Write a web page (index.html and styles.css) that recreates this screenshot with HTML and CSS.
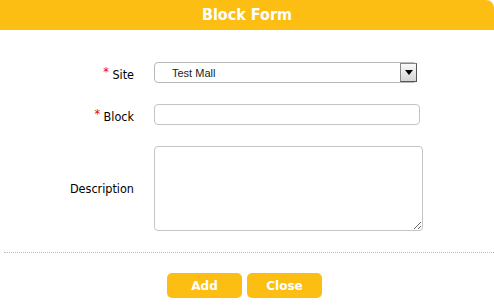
FILE: index.html
```html
<!DOCTYPE html>
<html lang="en">
<head>
    <meta charset="UTF-8">
    <title>Block Form</title>
    <link rel="stylesheet" href="styles.css">
</head>
<body>
    <div class="dialog">
        <div class="dialog-title">Block Form</div>
        <form class="block-form">
            <label class="field-label" for="site"><span class="req">*</span> Site</label>
            <div class="select-box" id="site">
                <span class="select-value">Test Mall</span>
                <span class="select-arrow">
                    <svg width="8" height="5" viewBox="0 0 8 5"><path d="M0 0h8L4 5z" fill="#000"/></svg>
                </span>
            </div>

            <label class="field-label" for="block"><span class="req">*</span> Block</label>
            <input class="text-input" type="text" id="block" name="block">

            <label class="field-label" for="description">Description</label>
            <textarea class="text-area" id="description" name="description"></textarea>
        </form>
        <div class="actions">
            <button type="button" class="btn">Add</button>
            <button type="button" class="btn">Close</button>
        </div>
    </div>
</body>
</html>
```

FILE: styles.css
```css
body {
    margin: 0;
    background: #fff;
    font-family: "DejaVu Sans Condensed", "DejaVu Sans", sans-serif;
    font-size: 12.5px;
    color: #000;
}
.dialog {
    width: 494px;
}
.dialog-title {
    height: 30px;
    line-height: 30px;
    background: #fdbe14;
    color: #fff;
    font-weight: bold;
    font-size: 16px;
    text-align: center;
    border-top-right-radius: 8px;
}
.block-form {
    display: grid;
    grid-template-columns: 134px auto;
    column-gap: 20px;
    row-gap: 21px;
    align-items: center;
    padding-top: 32px;
    justify-items: start;
}
.field-label {
    justify-self: end;
}
.req {
    color: #e00;
    vertical-align: 3px;
}
.select-box {
    box-sizing: border-box;
    width: 263px;
    height: 21px;
    border: 1px solid #b8b8b8;
    border-radius: 4px;
    display: flex;
    align-items: center;
    justify-content: space-between;
    font-family: "Liberation Sans", sans-serif;
    font-size: 11px;
    color: #222;
}
.select-value {
    padding-left: 17px;
}
.select-arrow {
    box-sizing: border-box;
    width: 17px;
    height: 19px;
    margin-right: -1px;
    border: 1px solid #555;
    border-left-color: #888;
    border-top-color: #888;
    background: linear-gradient(#fafafa, #d4d4d4);
    display: flex;
    align-items: center;
    justify-content: center;
}
.text-input {
    box-sizing: border-box;
    width: 266px;
    height: 21px;
    margin: 0;
    border: 1px solid #c4c4c4;
    border-radius: 4px;
}
.text-area {
    box-sizing: border-box;
    width: 269px;
    height: 85px;
    margin: 0;
    border: 1px solid #c4c4c4;
    border-radius: 4px;
}
.actions {
    margin: 21px 0 0 4px;
    border-top: 1px dotted #bbb;
    padding: 20px 9px 0 0;
    display: flex;
    justify-content: center;
    gap: 5px;
}
.btn {
    width: 75px;
    height: 25px;
    border: none;
    border-radius: 5px;
    background: #fdbe14;
    color: #fff;
    font-family: "DejaVu Sans", sans-serif;
    font-weight: bold;
    font-size: 12px;
}
```
